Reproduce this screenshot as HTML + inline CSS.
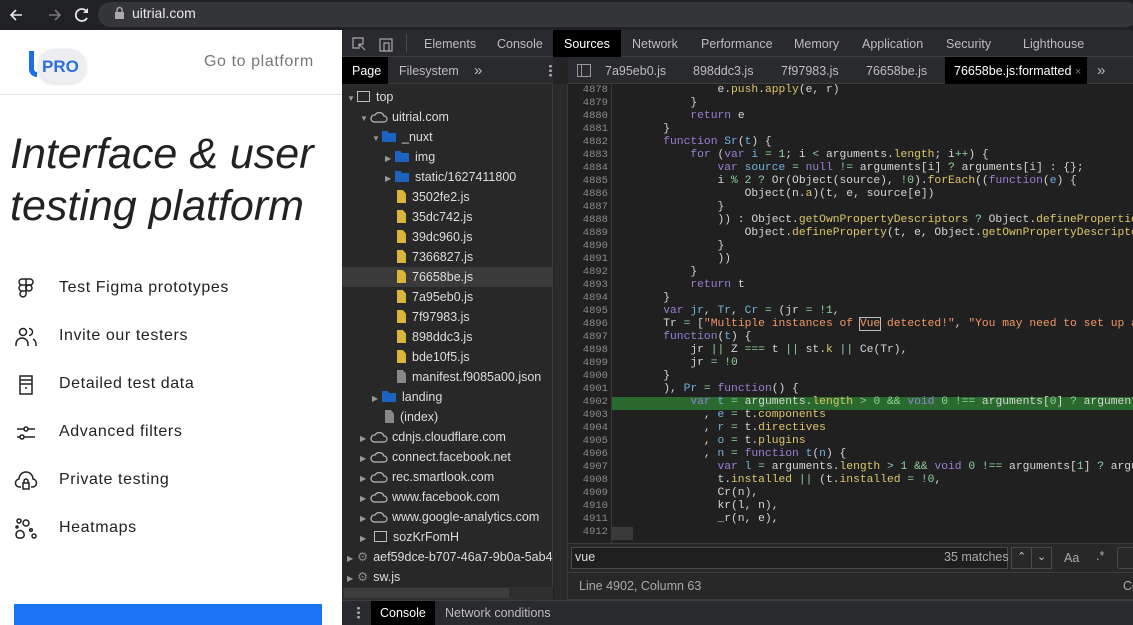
<!DOCTYPE html>
<html><head><meta charset="utf-8"><style>
*{margin:0;padding:0;box-sizing:border-box}
body{width:1133px;height:625px;overflow:hidden;position:relative;background:#fff;font-family:"Liberation Sans",sans-serif}
.a{position:absolute}
.top{left:0;top:0;width:1133px;height:30px;background:#202124}
.url{left:98px;top:2px;width:1040px;height:25px;background:#35363a;border-radius:13px}
.dt{left:342px;top:30px;width:791px;height:595px;background:#242424}
.tab{color:#bdbdbd;font-size:12.5px;top:37px}
.tree div{position:absolute;height:20px;line-height:20px;font-size:12.5px;color:#dcdcdc;white-space:nowrap}
.fi{display:inline-block;width:9px;height:13px;background:#d9b53a;vertical-align:-2px;margin-right:6px;clip-path:polygon(0 0,65% 0,100% 28%,100% 100%,0 100%)}
.fg{background:#888}
.fo{display:inline-block;width:14px;height:11px;background:#1d63c2;vertical-align:-1px;margin-right:6px;clip-path:polygon(0 0,40% 0,50% 18%,100% 18%,100% 100%,0 100%)}
.ar{display:inline-block;width:10px;color:#999;font-size:8px}
.cl{display:inline-block;width:18px;height:12px;vertical-align:-2px;margin-right:4px}
pre{font-family:"Liberation Mono",monospace;font-size:11.3px;line-height:13px;color:#d5d5d5}
.k{color:#9a7fd5}.v{color:#6fb3dc}.p{color:#dcc66a}.g{color:#8fd19e}.s{color:#f29766}
.feat{left:59px;font-size:16px;color:#222;letter-spacing:.6px}
.ic{left:14px;width:24px;height:24px}
</style></head><body>
<div class="a top"></div>
<div class="a url"></div>
<svg class="a" style="left:8px;top:6px" width="80" height="18"><path d="M14 9H3M8 4L3 9l5 5" stroke="#e8e8e8" stroke-width="1.6" fill="none"/><path d="M52 9H41M47 4l5 5-5 5" stroke="#777" stroke-width="1.6" fill="none"/><path d="M79 6a6 6 0 1 0 0 6" stroke="#e8e8e8" stroke-width="1.8" fill="none"/><path d="M80 2v5h-5z" fill="#e8e8e8"/></svg>
<svg class="a" style="left:114px;top:6px" width="12" height="14"><rect x="1" y="6" width="9" height="7" fill="#aaa"/><path d="M3 6V4a2.5 2.5 0 0 1 5 0v2" stroke="#aaa" stroke-width="1.4" fill="none"/></svg>
<div class="a" style="left:132px;top:5px;color:#e8e8e8;font-size:14px">uitrial.com</div>

<!-- left page -->
<div class="a" style="left:38px;top:49px;width:48px;height:34px;background:#eceef2;border-radius:16px;box-shadow:0 1px 3px rgba(0,0,0,.15)"></div>
<div class="a" style="left:29px;top:51px;width:8px;height:26px;border-left:5px solid #1a6fe8;border-bottom:5px solid #1a6fe8;border-bottom-left-radius:8px"></div>
<div class="a" style="left:42px;top:57px;font-size:17px;font-weight:bold;color:#2d6fd8">PRO</div>
<div class="a" style="left:204px;top:53px;font-size:16px;color:#777;letter-spacing:.6px">Go to platform</div>
<div class="a" style="left:0;top:94px;width:342px;height:1px;background:#e2e2e2"></div>
<div class="a" style="left:10px;top:128px;font-size:43px;font-style:italic;font-weight:300;color:#222;line-height:52px">Interface &amp; user<br>testing platform</div>
<svg class="a ic" style="top:276px" viewBox="0 0 24 24" fill="none" stroke="#222" stroke-width="1.5"><path d="M8 3h4v6H8a3 3 0 0 1 0-6zM12 3h4a3 3 0 0 1 0 6h-4zM8 9h4v6H8a3 3 0 0 1 0-6zM12 15v3a3 3 0 1 1-4-3"/><circle cx="15" cy="12" r="3"/></svg>
<div class="a feat" style="top:279px">Test Figma prototypes</div>
<svg class="a ic" style="top:325px" viewBox="0 0 24 24" fill="none" stroke="#222" stroke-width="1.5"><circle cx="9" cy="7" r="3.5"/><path d="M2 21v-2a6 6 0 0 1 12 0v2M15 3.5a3.5 3.5 0 0 1 0 7M19 14a6 6 0 0 1 3 5v2"/></svg>
<div class="a feat" style="top:327px">Invite our testers</div>
<svg class="a ic" style="top:373px" viewBox="0 0 24 24" fill="none" stroke="#222" stroke-width="1.5"><rect x="6" y="3" width="12" height="18"/><path d="M6 7h12M6 11h12M11 15h2"/></svg>
<div class="a feat" style="top:375px">Detailed test data</div>
<svg class="a ic" style="top:421px" viewBox="0 0 24 24" fill="none" stroke="#222" stroke-width="1.5"><path d="M3 8h7M14 8h7M3 16h3M10 16h11"/><circle cx="12" cy="8" r="2"/><circle cx="8" cy="16" r="2"/></svg>
<div class="a feat" style="top:423px">Advanced filters</div>
<svg class="a ic" style="top:469px" viewBox="0 0 24 24" fill="none" stroke="#222" stroke-width="1.5"><path d="M7 18H6a4 4 0 0 1-1-8 7 7 0 0 1 14 0 4 4 0 0 1-1 8h-1"/><rect x="9" y="14" width="6" height="6"/><path d="M10 14v-2a2 2 0 0 1 4 0v2"/></svg>
<div class="a feat" style="top:471px">Private testing</div>
<svg class="a ic" style="top:517px" viewBox="0 0 24 24" fill="none" stroke="#222" stroke-width="1.5"><circle cx="5" cy="4" r="2"/><circle cx="12" cy="6" r="3"/><circle cx="3" cy="10" r="1"/><path d="M4 21a4 4 0 1 1 6-4 3 3 0 0 1-3 4z"/><circle cx="17" cy="13" r="1.3"/><circle cx="20" cy="19" r="2"/></svg>
<div class="a feat" style="top:519px">Heatmaps</div>
<div class="a" style="left:14px;top:604px;width:308px;height:21px;background:#1a73f0"></div>

<!-- devtools -->
<div class="a dt"></div>
<div class="a" style="left:342px;top:30px;width:791px;height:27px;background:#292a2d;border-bottom:1px solid #3d3d3d"></div>
<svg class="a" style="left:351px;top:36px" width="48" height="16" fill="none" stroke="#aaa" stroke-width="1.2"><path d="M7 12H2V2h10v5"/><path d="M8 8l6 6M8 8v5M8 8h5"/><rect x="29" y="3" width="12" height="12"/><rect x="33" y="7" width="5" height="8"/></svg>
<div class="a" style="left:406px;top:34px;width:1px;height:18px;background:#4a4a4a"></div>
<div class="a tab" style="left:424px">Elements</div>
<div class="a tab" style="left:497px">Console</div>
<div class="a" style="left:553px;top:30px;width:68px;height:27px;background:#000"></div>
<div class="a tab" style="left:564px;color:#fff">Sources</div>
<div class="a tab" style="left:632px">Network</div>
<div class="a tab" style="left:701px">Performance</div>
<div class="a tab" style="left:794px">Memory</div>
<div class="a tab" style="left:862px">Application</div>
<div class="a tab" style="left:946px">Security</div>
<div class="a tab" style="left:1023px">Lighthouse</div>

<!-- navigator -->
<div class="a" style="left:342px;top:57px;width:211px;height:543px;background:#282828;border-right:1px solid #3d3d3d"></div>
<div class="a" style="left:342px;top:57px;width:211px;height:27px;background:#292a2d;border-bottom:1px solid #3d3d3d"></div>
<div class="a" style="left:342px;top:57px;width:46px;height:27px;background:#000"></div>
<div class="a tab" style="left:352px;top:64px;color:#fff">Page</div>
<div class="a tab" style="left:399px;top:64px">Filesystem</div>
<div class="a tab" style="left:474px;top:62px;font-size:15px">»</div>
<div class="a" style="left:549px;top:64px;width:3px;height:13px;background:radial-gradient(circle,#aaa 1.3px,transparent 1.5px) 0 0/3px 4.5px"></div>
<div class="a" style="left:342px;top:267px;width:211px;height:20px;background:#3a3a3a"></div>
<div class="tree">
<div style="left:347px;top:87px"><span class="ar">▼</span><span style="display:inline-block;width:13px;height:11px;border:1.3px solid #bbb;vertical-align:-1px;margin-right:6px"></span>top</div>
<div style="left:360px;top:107px"><span class="ar">▼</span><svg class="cl" viewBox="0 0 18 12" fill="none" stroke="#bbb" stroke-width="1.2"><path d="M4 11h10a3 3 0 0 0 0-6 5 5 0 0 0-9-1 3.5 3.5 0 0 0-1 7z"/></svg>uitrial.com</div>
<div style="left:372px;top:127px"><span class="ar">▼</span><span class="fo"></span>_nuxt</div>
<div style="left:385px;top:147px"><span class="ar">▶</span><span class="fo"></span>img</div>
<div style="left:385px;top:167px"><span class="ar">▶</span><span class="fo"></span>static/1627411800</div>
<div style="left:397px;top:187px"><span class="fi"></span>3502fe2.js</div>
<div style="left:397px;top:207px"><span class="fi"></span>35dc742.js</div>
<div style="left:397px;top:227px"><span class="fi"></span>39dc960.js</div>
<div style="left:397px;top:247px"><span class="fi"></span>7366827.js</div>
<div style="left:397px;top:267px"><span class="fi"></span>76658be.js</div>
<div style="left:397px;top:287px"><span class="fi"></span>7a95eb0.js</div>
<div style="left:397px;top:307px"><span class="fi"></span>7f97983.js</div>
<div style="left:397px;top:327px"><span class="fi"></span>898ddc3.js</div>
<div style="left:397px;top:347px"><span class="fi"></span>bde10f5.js</div>
<div style="left:397px;top:367px"><span class="fi fg"></span>manifest.f9085a00.json</div>
<div style="left:372px;top:387px"><span class="ar">▶</span><span class="fo"></span>landing</div>
<div style="left:385px;top:407px"><span class="fi fg"></span>(index)</div>
<div style="left:360px;top:427px"><span class="ar">▶</span><svg class="cl" viewBox="0 0 18 12" fill="none" stroke="#bbb" stroke-width="1.2"><path d="M4 11h10a3 3 0 0 0 0-6 5 5 0 0 0-9-1 3.5 3.5 0 0 0-1 7z"/></svg>cdnjs.cloudflare.com</div>
<div style="left:360px;top:447px"><span class="ar">▶</span><svg class="cl" viewBox="0 0 18 12" fill="none" stroke="#bbb" stroke-width="1.2"><path d="M4 11h10a3 3 0 0 0 0-6 5 5 0 0 0-9-1 3.5 3.5 0 0 0-1 7z"/></svg>connect.facebook.net</div>
<div style="left:360px;top:467px"><span class="ar">▶</span><svg class="cl" viewBox="0 0 18 12" fill="none" stroke="#bbb" stroke-width="1.2"><path d="M4 11h10a3 3 0 0 0 0-6 5 5 0 0 0-9-1 3.5 3.5 0 0 0-1 7z"/></svg>rec.smartlook.com</div>
<div style="left:360px;top:487px"><span class="ar">▶</span><svg class="cl" viewBox="0 0 18 12" fill="none" stroke="#bbb" stroke-width="1.2"><path d="M4 11h10a3 3 0 0 0 0-6 5 5 0 0 0-9-1 3.5 3.5 0 0 0-1 7z"/></svg>www.facebook.com</div>
<div style="left:360px;top:507px"><span class="ar">▶</span><svg class="cl" viewBox="0 0 18 12" fill="none" stroke="#bbb" stroke-width="1.2"><path d="M4 11h10a3 3 0 0 0 0-6 5 5 0 0 0-9-1 3.5 3.5 0 0 0-1 7z"/></svg>www.google-analytics.com</div>
<div style="left:360px;top:527px"><span class="ar">▶</span><span style="display:inline-block;width:13px;height:11px;border:1.3px solid #bbb;vertical-align:-1px;margin-right:6px;margin-left:4px"></span>sozKrFomH</div>
<div style="left:347px;top:547px;width:206px;overflow:hidden"><span class="ar">▶</span><span style="color:#888;margin-right:5px">⚙</span>aef59dce-b707-46a7-9b0a-5ab4</div>
<div style="left:347px;top:567px"><span class="ar">▶</span><span style="color:#888;margin-right:5px">⚙</span>sw.js</div>
</div>
<div class="a" style="left:342px;top:587px;width:211px;height:13px;background:#2f2f2f"></div>
<div class="a" style="left:344px;top:588px;width:165px;height:10px;background:#3d3d3d"></div>

<!-- editor tabs -->
<div class="a" style="left:568px;top:57px;width:565px;height:27px;background:#292a2d;border-bottom:1px solid #3d3d3d"></div>
<div class="a" style="left:577px;top:64px;width:14px;height:13px;border:1px solid #999"><div style="position:absolute;left:3px;top:0;width:1px;height:11px;background:#999"></div></div>
<div class="a tab" style="left:605px;top:64px">7a95eb0.js</div>
<div class="a tab" style="left:693px;top:64px">898ddc3.js</div>
<div class="a tab" style="left:781px;top:64px">7f97983.js</div>
<div class="a tab" style="left:866px;top:64px">76658be.js</div>
<div class="a" style="left:945px;top:57px;width:142px;height:27px;background:#000"></div>
<div class="a tab" style="left:954px;top:64px;color:#fff">76658be.js:formatted <span style="color:#777;font-size:11px">×</span></div>
<div class="a tab" style="left:1097px;top:62px;font-size:15px">»</div>

<!-- code -->
<div class="a" style="left:554px;top:84px;width:14px;height:516px;background:#2a2a2a;border-right:1px solid #3a3a3a"></div>
<div class="a" style="left:568px;top:84px;width:565px;height:459px;background:#202020"></div>
<div class="a" style="left:611px;top:84px;width:1px;height:459px;background:#3a3a3a"></div>
<div class="a" style="left:612px;top:397px;width:521px;height:13px;background:#2a6a2e"></div>
<div class="a" style="left:612px;top:527px;width:21px;height:13px;background:#3a3a3a"></div>
<pre class="a" style="left:566px;top:84px;width:42px;text-align:right;color:#8a8a8a;font-size:10.5px">4878
4879
4880
4881
4882
4883
4884
4885
4886
4887
4888
4889
4890
4891
4892
4893
4894
4895
4896
4897
4898
4899
4900
4901
4902
4903
4904
4905
4906
4907
4908
4909
4910
4911
4912</pre>
<div class="a" style="left:612px;top:84px;width:521px;height:459px;overflow:hidden">
<pre class="a" style="left:-3px;top:0;white-space:pre">                e.<span class="p">push</span>.<span class="p">apply</span>(e, r)
            }
            <span class="k">return</span> e
        }
        <span class="k">function</span> <span class="v">Sr</span>(<span class="v">t</span>) {
            <span class="k">for</span> (<span class="k">var</span> <span class="v">i</span> <span class="g">=</span> <span class="g">1</span>; i <span class="g">&lt;</span> arguments.<span class="p">length</span>; i<span class="g">++</span>) {
                <span class="k">var</span> <span class="v">source</span> <span class="g">=</span> <span class="k">null</span> <span class="g">!=</span> arguments[i] <span class="g">?</span> arguments[i] : {};
                i <span class="g">%</span> <span class="g">2</span> <span class="g">?</span> Or(Object(source), <span class="g">!0</span>).<span class="p">forEach</span>((<span class="k">function</span>(<span class="v">e</span>) {
                    Object(n.<span class="p">a</span>)(t, e, source[e])
                }
                )) : Object.<span class="p">getOwnPropertyDescriptors</span> <span class="g">?</span> Object.<span class="p">defineProperties</span>(t, Object.<span class="p">getOwn</span>
                    Object.<span class="p">defineProperty</span>(t, e, Object.<span class="p">getOwnPropertyDescriptor</span>(source, e))
                }
                ))
            }
            <span class="k">return</span> t
        }
        <span class="k">var</span> <span class="v">jr</span>, <span class="v">Tr</span>, <span class="v">Cr</span> <span class="g">=</span> (jr <span class="g">=</span> <span class="g">!1</span>,
        Tr <span class="g">=</span> [<span class="s">"Multiple instances of <span style="outline:1px solid #bbb">Vue</span> detected!"</span>, <span class="s">"You may need to set up an alias"</span>
        <span class="k">function</span>(<span class="v">t</span>) {
            jr <span class="g">||</span> Z <span class="g">===</span> t <span class="g">||</span> st.<span class="p">k</span> <span class="g">||</span> Ce(Tr),
            jr <span class="g">=</span> <span class="g">!0</span>
        }
        ), <span class="v">Pr</span> <span class="g">=</span> <span class="k">function</span>() {
            <span class="k">var</span> <span class="v">t</span> <span class="g">=</span> arguments.<span class="p">length</span> <span class="g">&gt;</span> <span class="g">0</span> <span class="g">&amp;&amp;</span> <span class="k">void</span> <span class="g">0</span> <span class="g">!==</span> arguments[<span class="g">0</span>] <span class="g">?</span> arguments[0] : {}
              , <span class="v">e</span> <span class="g">=</span> t.<span class="p">components</span>
              , <span class="v">r</span> <span class="g">=</span> t.<span class="p">directives</span>
              , <span class="v">o</span> <span class="g">=</span> t.<span class="p">plugins</span>
              , <span class="v">n</span> <span class="g">=</span> <span class="k">function</span> <span class="v">t</span>(<span class="v">n</span>) {
                <span class="k">var</span> <span class="v">l</span> <span class="g">=</span> arguments.<span class="p">length</span> <span class="g">&gt;</span> <span class="g">1</span> <span class="g">&amp;&amp;</span> <span class="k">void</span> <span class="g">0</span> <span class="g">!==</span> arguments[<span class="g">1</span>] <span class="g">?</span> arguments[1] : {};
                t.<span class="p">installed</span> <span class="g">||</span> (t.<span class="p">installed</span> <span class="g">=</span> <span class="g">!0</span>,
                Cr(n),
                kr(l, n),
                _r(n, e),
</pre></div>

<!-- search bar -->
<div class="a" style="left:568px;top:543px;width:565px;height:29px;background:#282828;border-top:1px solid #3d3d3d"></div>
<div class="a" style="left:571px;top:547px;width:437px;height:22px;background:#1e1e1e;border:1px solid #4a4a4a"></div>
<div class="a" style="left:575px;top:550px;font-size:12.5px;color:#ddd">vue</div>
<div class="a" style="left:944px;top:550px;font-size:12.5px;color:#aaa">35 matches</div>
<div class="a" style="left:1011px;top:547px;width:41px;height:22px;border:1px solid #4a4a4a"><div style="position:absolute;left:19px;top:0;width:1px;height:20px;background:#4a4a4a"></div><span style="position:absolute;left:5px;top:2px;color:#ccc;font-size:11px">⌃</span><span style="position:absolute;left:25px;top:2px;color:#ccc;font-size:11px">⌄</span></div>
<div class="a" style="left:1064px;top:551px;font-size:12.5px;color:#aaa">Aa</div>
<div class="a" style="left:1096px;top:549px;font-size:12.5px;color:#aaa">.*</div>
<div class="a" style="left:1117px;top:547px;width:16px;height:22px;border:1px solid #4a4a4a;border-right:none;border-radius:3px 0 0 3px"></div>
<div class="a" style="left:568px;top:572px;width:565px;height:28px;background:#282828;border-top:1px solid #3d3d3d;border-bottom:1px solid #3d3d3d"></div>
<div class="a" style="left:579px;top:579px;font-size:12.5px;color:#aaa">Line 4902, Column 63</div>
<div class="a" style="left:1123px;top:579px;width:10px;overflow:hidden;font-size:12.5px;color:#aaa">Co</div>

<!-- drawer -->
<div class="a" style="left:342px;top:600px;width:791px;height:25px;background:#292a2d;border-top:1px solid #3d3d3d"></div>
<div class="a" style="left:357px;top:606px;width:3px;height:13px;background:radial-gradient(circle,#aaa 1.3px,transparent 1.5px) 0 0/3px 4.5px"></div>
<div class="a" style="left:371px;top:601px;width:64px;height:24px;background:#000"></div>
<div class="a tab" style="left:380px;top:606px;color:#fff">Console</div>
<div class="a tab" style="left:445px;top:606px">Network conditions</div>
</body></html>
